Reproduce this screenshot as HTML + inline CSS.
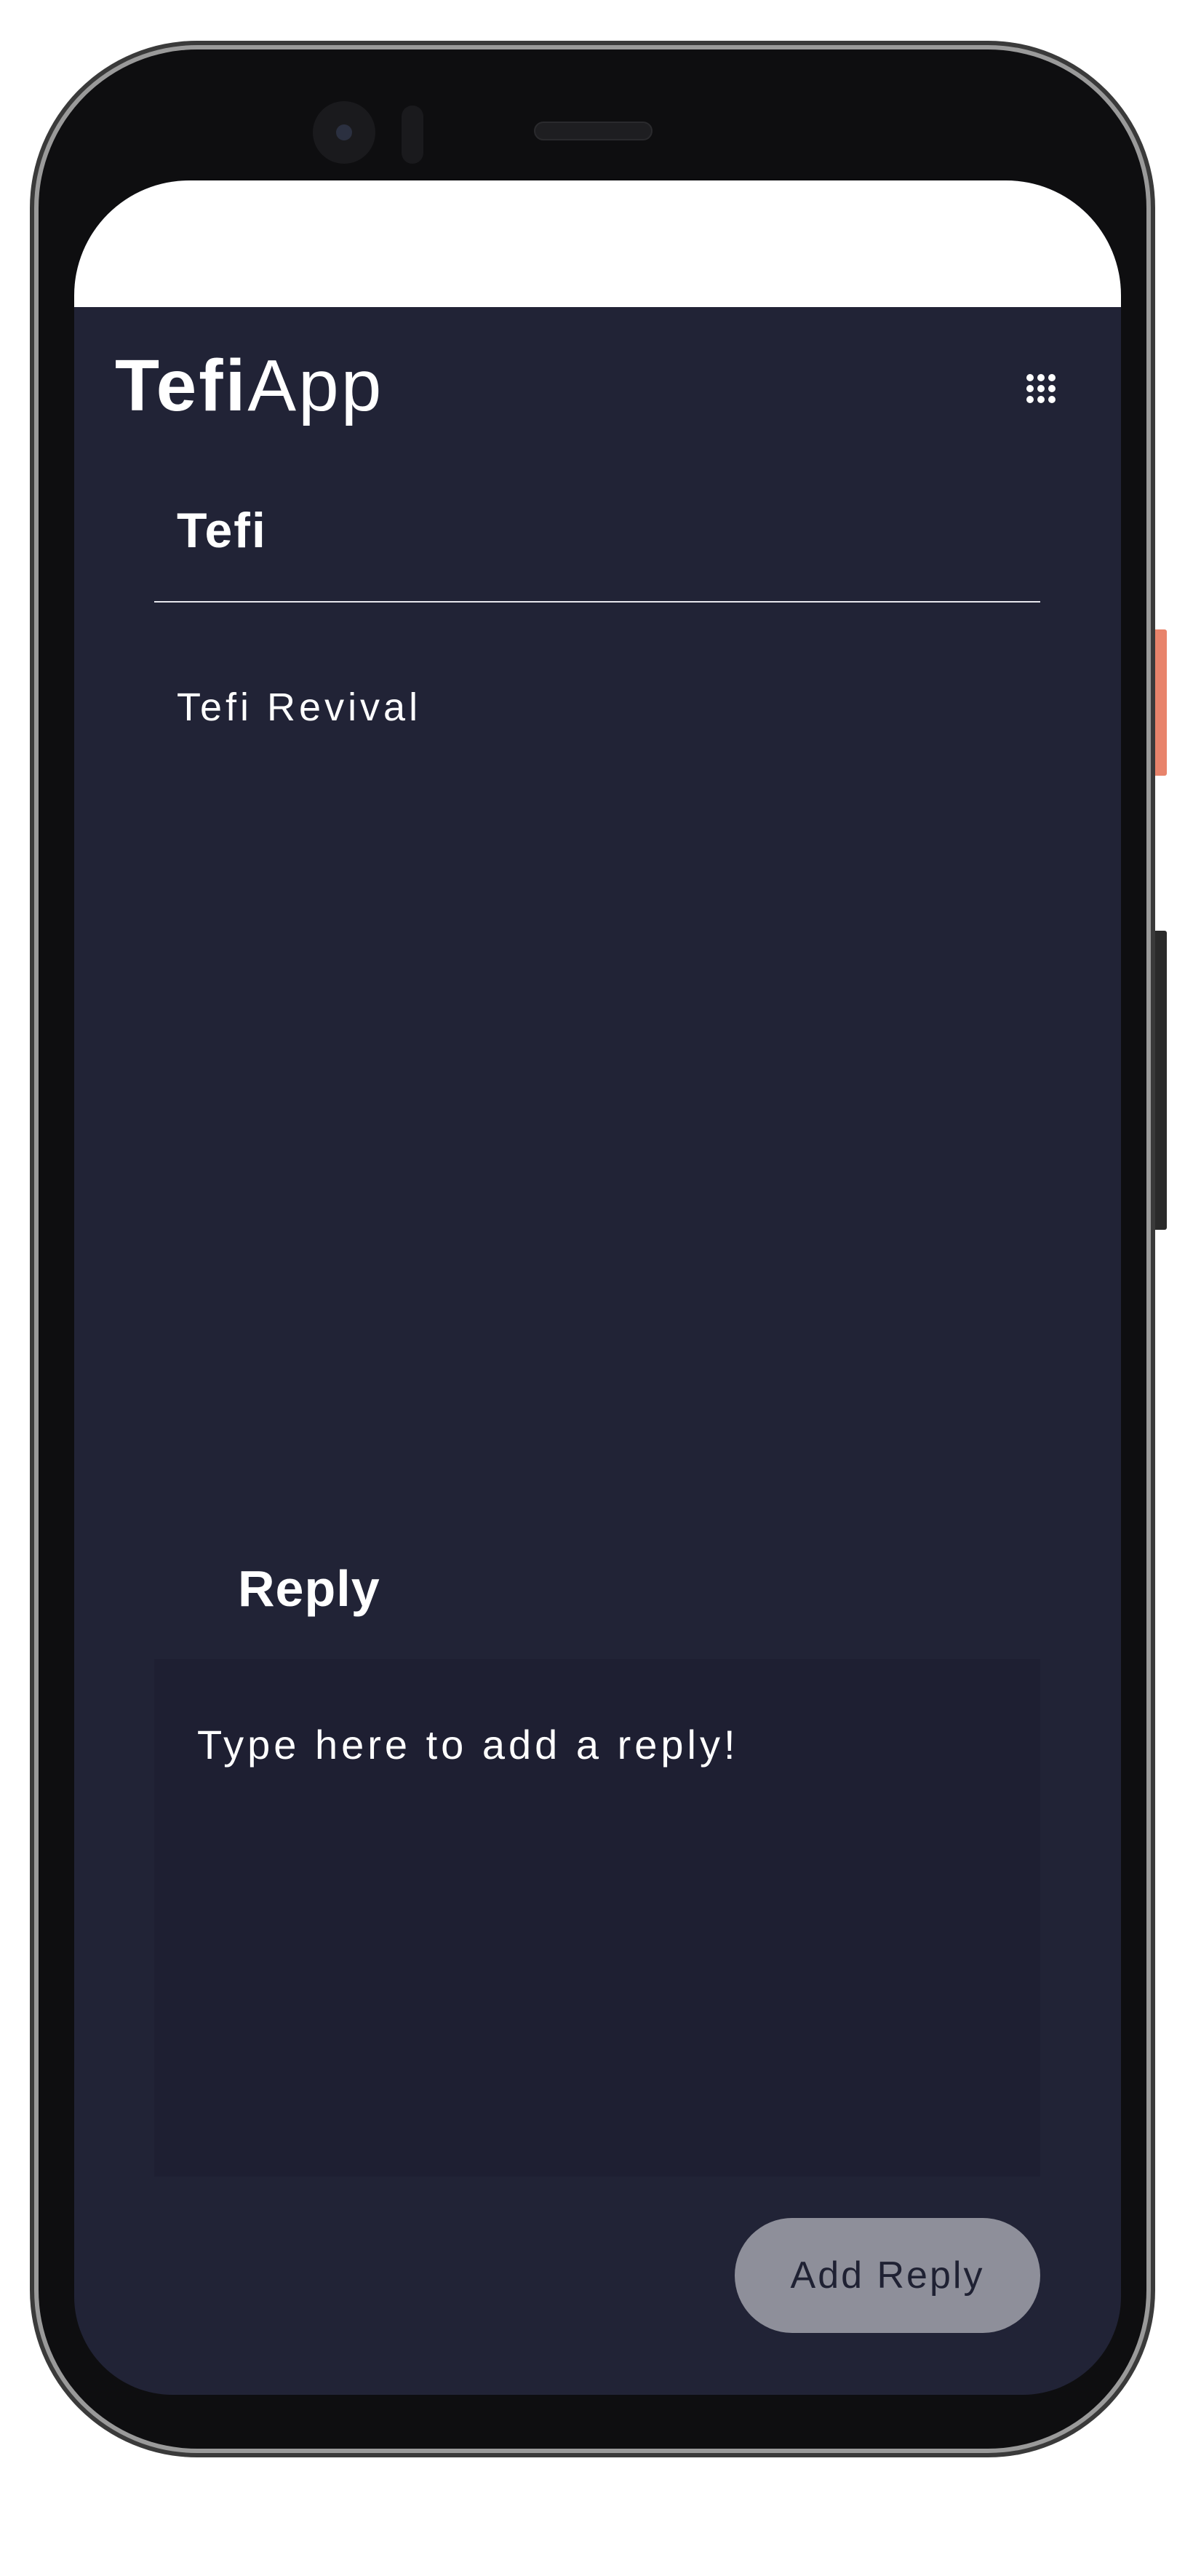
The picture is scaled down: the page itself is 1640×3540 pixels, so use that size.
<!DOCTYPE html>
<html><head><meta charset="utf-8"><style>
*{margin:0;padding:0;box-sizing:border-box}
body{width:1640px;height:3540px;background:#fff;position:relative;overflow:hidden;font-family:"Liberation Sans",sans-serif}
.a{position:absolute}
</style></head><body>
<div class="a" style="left:1584px;top:865px;width:20px;height:201px;background:#e8836b;border-radius:3px"></div>
<div class="a" style="left:1584px;top:1279px;width:20px;height:411px;background:#2a2a2a;border-radius:3px"></div>
<div class="a" style="left:41px;top:56px;width:1547px;height:3321px;border-radius:230px;background:#3a3a3a"></div>
<div class="a" style="left:47px;top:62px;width:1535px;height:3309px;border-radius:224px;background:#9a9a9a"></div>
<div class="a" style="left:53px;top:68px;width:1523px;height:3297px;border-radius:218px;background:#0e0e10"></div>
<div class="a" style="left:430px;top:139px;width:86px;height:86px;border-radius:50%;background:#1a1a1d"></div>
<div class="a" style="left:462px;top:171px;width:22px;height:22px;border-radius:50%;background:#2b3040"></div>
<div class="a" style="left:552px;top:145px;width:30px;height:80px;border-radius:15px;background:#1a1a1d"></div>
<div class="a" style="left:734px;top:167px;width:163px;height:26px;border-radius:13px;background:#1e1e21;border:2px solid #2a2a2d"></div>
<div class="a" style="left:102px;top:248px;width:1439px;height:3043px;border-radius:158px 158px 135px 135px;background:#212336;overflow:hidden">
  <div class="a" style="left:0;top:0;width:1439px;height:174px;background:#fff"></div>
</div>
<div class="a" style="left:158px;top:480px;font-size:100px;color:#fff;line-height:1;letter-spacing:3px"><b>Tefi</b>App</div>
<svg class="a" style="left:1410px;top:513px" width="42" height="42" viewBox="0 0 42 42" fill="#fff">
<circle cx="6" cy="6" r="5"/><circle cx="21" cy="6" r="5"/><circle cx="36" cy="6" r="5"/>
<circle cx="6" cy="21" r="5"/><circle cx="21" cy="21" r="5"/><circle cx="36" cy="21" r="5"/>
<circle cx="6" cy="36" r="5"/><circle cx="21" cy="36" r="5"/><circle cx="36" cy="36" r="5"/></svg>
<div class="a" style="left:243px;top:695px;font-size:68px;font-weight:bold;color:#fff;line-height:1;letter-spacing:2px">Tefi</div>
<div class="a" style="left:212px;top:826px;width:1218px;height:2px;background:#e8e8ee"></div>
<div class="a" style="left:243px;top:945px;font-size:54px;color:#fff;line-height:1;letter-spacing:5px">Tefi Revival</div>
<div class="a" style="left:327px;top:2148px;font-size:70px;font-weight:bold;color:#fff;line-height:1;letter-spacing:1px">Reply</div>
<div class="a" style="left:212px;top:2280px;width:1218px;height:711px;background:#1e1f32"></div>
<div class="a" style="left:271px;top:2370px;font-size:56px;color:#fff;line-height:1;letter-spacing:5px">Type here to add a reply!</div>
<div class="a" style="left:1010px;top:3048px;width:420px;height:158px;border-radius:79px;background:#8e8f9a;color:#1f2133;font-size:52px;line-height:158px;text-align:center;letter-spacing:3px">Add Reply</div>
</body></html>
